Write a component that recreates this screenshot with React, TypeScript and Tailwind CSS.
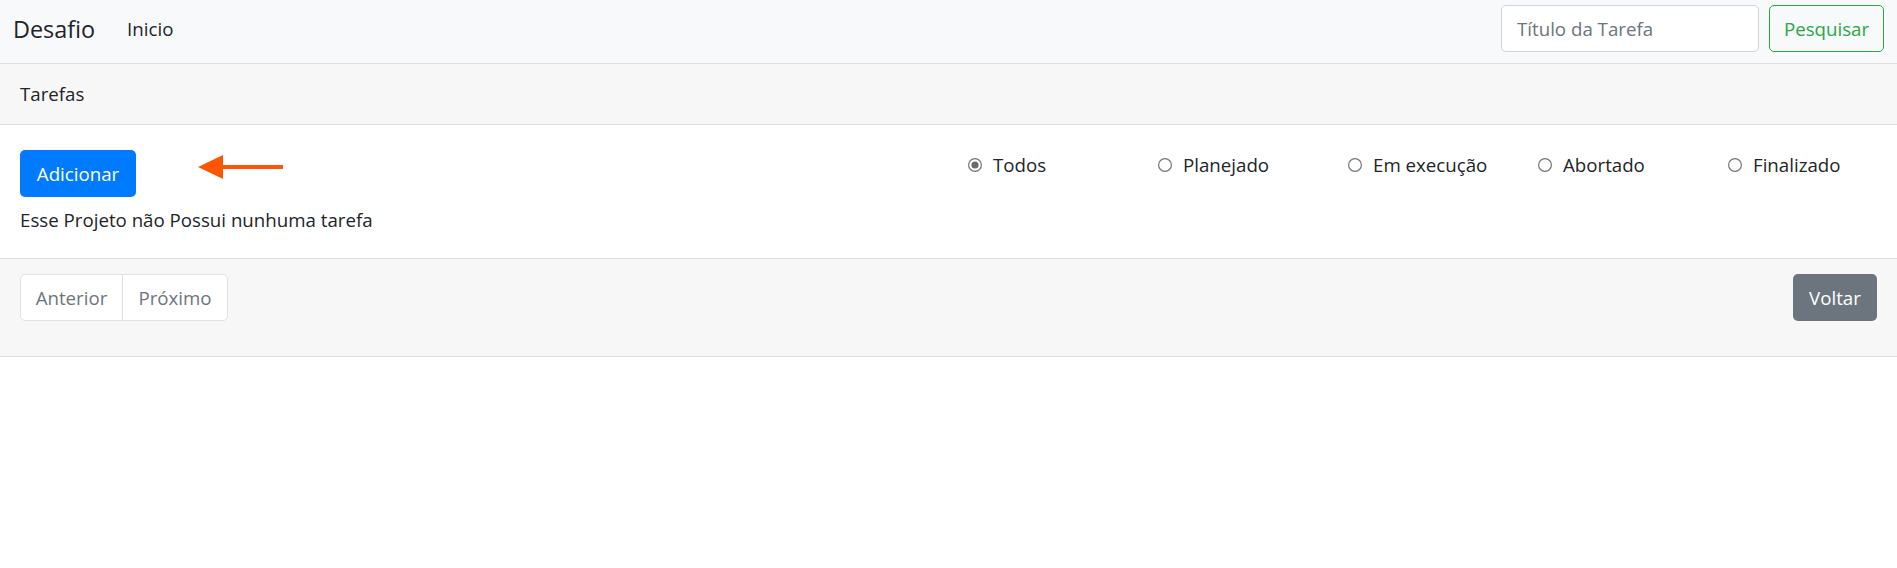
import { useState } from "react";

const filtros = ["Todos", "Planejado", "Em execução", "Abortado", "Finalizado"];

const Radio = ({ checked }: { checked: boolean }) => (
  <svg width="14" height="14" viewBox="0 0 14 14" className="shrink-0">
    <circle cx="7" cy="7" r="6.4" fill="#fff" stroke="#767676" strokeWidth="1.2" />
    {checked && <circle cx="7" cy="7" r="3.6" fill="#6b6b6b" />}
  </svg>
);

const App = () => {
  const [filtro, setFiltro] = useState("Todos");

  return (
    <div className="min-h-[568px] bg-white text-[18.7px] leading-[30px] text-[#212529] font-['Segoe_UI','Open_Sans',sans-serif]">
      {/* navbar */}
      <nav className="h-[64px] bg-[#f8f9fa] border-b border-[#dfdfdf]">
        <div className="flex h-[57px] items-center px-[13px]">
          <span className="text-[23.4px] leading-[36px]">Desafio</span>
          <a href="#" className="ml-[32px]">
            Inicio
          </a>
          <div className="ml-auto flex items-center">
            <input
              placeholder="Título da Tarefa"
              className="h-[47px] w-[258px] rounded-[5px] border border-[#ced4da] bg-white px-[15px] text-[18.7px] placeholder:text-[#6c757d] outline-none"
            />
            <button className="ml-[10px] h-[47px] w-[115px] rounded-[5px] border border-[#28a745] text-[#28a745]">
              Pesquisar
            </button>
          </div>
        </div>
      </nav>

      {/* card */}
      <div className="h-[61px] flex items-center px-[20px] bg-[#f7f7f7] border-b border-[#dfdfdf]">
        Tarefas
      </div>

      <div className="flex pt-[25px] pb-[23px] px-[20px]">
        <div className="w-[948px] shrink-0">
          <div className="flex items-start">
            <button className="h-[47px] w-[116px] rounded-[5px] bg-[#007bff] text-white">
              Adicionar
            </button>
            <svg width="88" height="26" viewBox="0 0 88 26" className="ml-[61px] mt-[4px]">
              <path d="M26 11 H86 V15 H26 Z" fill="#ff5500" />
              <path d="M1 13 L26 1 L26 25 Z" fill="#ff5500" />
            </svg>
          </div>
          <p className="mt-[8px]">Esse Projeto não Possui nunhuma tarefa</p>
        </div>
        <div className="flex">
          {filtros.map((f) => (
            <label
              key={f}
              onClick={() => setFiltro(f)}
              className="flex w-[190px] shrink-0 items-center gap-[11px] h-[30px] cursor-pointer"
            >
              <Radio checked={filtro === f} />
              <span>{f}</span>
            </label>
          ))}
        </div>
      </div>

      <div className="flex items-start justify-between bg-[#f7f7f7] border-y border-[#dfdfdf] pt-[15px] pb-[35px] px-[20px]">
        <div className="flex h-[47px] rounded-[5px] border border-[#dee2e6] bg-white text-[#6c757d]">
          <span className="flex w-[102px] items-center justify-center border-r border-[#dee2e6]">
            Anterior
          </span>
          <span className="flex w-[104px] items-center justify-center">Próximo</span>
        </div>
        <button className="h-[47px] w-[84px] rounded-[5px] bg-[#6c757d] text-white">
          Voltar
        </button>
      </div>
    </div>
  );
};

export default App;
